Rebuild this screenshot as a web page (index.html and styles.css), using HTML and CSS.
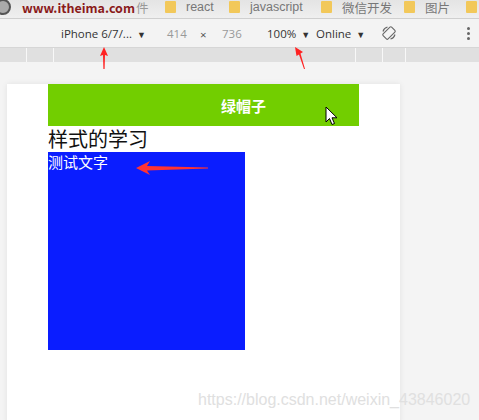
FILE: index.html
```html
<!DOCTYPE html>
<html>
<head>
<meta charset="utf-8">
<link rel="stylesheet" href="styles.css">
</head>
<body>
<div class="bookmarks">
  <span class="bm-logo"></span>
  <span class="bm-site">www.itheima.com</span><span class="bm-gray">件</span>
  <span class="folder fr"></span><span class="bm-text w-react">react</span>
  <span class="folder"></span><span class="bm-text w-js">javascript</span>
  <span class="folder"></span><span class="bm-text w-wx">微信开发</span>
  <span class="folder"></span><span class="bm-text w-pic">图片</span>
  <span class="folder"></span>
</div>
<div class="toolbar">
  <span class="t-device">iPhone 6/7/... <span class="tri">▼</span></span>
  <span class="t-w dim">414</span>
  <span class="t-x">×</span>
  <span class="t-h dim">736</span>
  <span class="t-zoom">100% <span class="tri">▼</span></span>
  <span class="t-online">Online <span class="tri">▼</span></span>
  <svg class="rotate" width="16" height="16" viewBox="0 0 16 16"><g fill="none" stroke="#666" stroke-width="1.1"><rect x="4.5" y="2" width="7" height="12" rx="1.2" transform="rotate(45 8 8)"/><path d="M2 6.5 A6.2 6.2 0 0 1 6.5 2"/><path d="M14 9.5 A6.2 6.2 0 0 1 9.5 14"/></g></svg>
  <span class="dots"><i></i><i></i><i></i></span>
</div>
<div class="ruler">
  <span class="seg s1"></span><span class="seg s2"></span><span class="seg s3"></span><span class="seg s4"></span><span class="seg s5"></span>
</div>
<div class="stage">
  <div class="device">
    <div class="header">绿帽子</div>
    <div class="title">样式的学习</div>
    <div class="box">测试文字</div>
  </div>
</div>
<svg class="arrow-up a1" width="10" height="22" viewBox="0 0 10 22"><path d="M5 0 L9 9 L6 8 L5.6 22 L4.4 22 L4 8 L1 9 Z" fill="#f22"/></svg>
<svg class="arrow-up a2" width="12" height="22" viewBox="0 0 12 22"><path d="M1 0 L9 5 L6.5 6.5 L11 22 L10 22 L5 7.5 L2.5 9 Z" fill="#f22"/></svg>
<svg class="arrow-left" width="72" height="14" viewBox="0 0 72 14"><path d="M0 7 L14 0 L11 5 L72 6.5 L72 7.5 L11 9.5 L14 14 Z" fill="#f33"/></svg>
<svg class="cursor" width="14" height="20" viewBox="0 0 14 20"><path d="M1 1 L1 16 L4.5 12.5 L7 18.5 L9.5 17.5 L7 11.8 L12 11.8 Z" fill="#fff" stroke="#000" stroke-width="1"/></svg>
<div class="watermark">https://blog.csdn.net/weixin_43846020</div>
</body>
</html>
```
FILE: styles.css
```css
html, body { margin: 0; padding: 0; }
body {
  width: 479px; height: 420px; overflow: hidden; position: relative;
  background: #f4f4f4;
  font-family: "Noto Sans CJK SC", "Liberation Sans", sans-serif;
}
.bookmarks {
  height: 18px; display: flex; align-items: center;
  background: linear-gradient(#e4e4e4, #efefef);
  border-bottom: 1px solid #cfcfcf;
  font-size: 12.5px; color: #888; white-space: nowrap; overflow: hidden;
}
.bookmarks > span { position: relative; top: -2px; flex: none; }
.bm-logo {
  width: 12px; height: 12px; border-radius: 50%; margin-left: -5px;
  border: 2px solid #555; background: #aaa;
}
.bm-site {
  color: #8a1a1a; font-weight: bold; font-size: 12.5px; margin-left: 11px;
  width: 114px; letter-spacing: 0;
}
.bm-gray { color: #999; width: 11px; }
.folder {
  width: 11px; height: 12px; background: #f2c85a; border-radius: 1px;
  margin-right: 10px;
}
.fr { margin-left: 18px; }
.bm-text { color: #777; font-family: "Liberation Sans", "Noto Sans CJK SC", sans-serif; font-size: 12.5px; }
.w-react { width: 43px; }
.w-js { width: 71px; }
.w-wx { width: 62px; }
.w-pic { width: 41px; }
.toolbar {
  height: 28px; display: flex; align-items: center;
  background: #f3f3f3; font-size: 11.5px; color: #333;
  font-family: "Open Sans", "Liberation Sans", sans-serif;
  padding-left: 61px; box-sizing: border-box;
}
.toolbar > span { flex: none; }
.tri { font-size: 9px; margin-left: 2px; }
.dim { color: #999; }
.t-device { width: 106px; }
.t-w { width: 33px; }
.t-x { width: 22px; color: #555; position: relative; top: 1px; }
.t-h { width: 45px; }
.t-zoom { width: 49px; }
.t-online { width: 65px; }
.rotate { flex: none; }
.dots { margin-left: auto; margin-right: 9px; display: flex; flex-direction: column; gap: 2px; }
.dots i { width: 3px; height: 3px; background: #666; border-radius: 50%; display: block; }
.ruler {
  height: 14px; background: #e0e0e0; position: relative;
  border-top: 1px solid #d6d6d6;
}
.seg { position: absolute; top: 0; bottom: 0; width: 1px; background: #f8f8f8; }
.s1 { left: 26px; } .s2 { left: 53px; } .s3 { left: 355px; } .s4 { left: 382px; } .s5 { left: 405px; }
.stage { padding: 23px 0 0 7px; }
.device {
  width: 393px; height: 340px; background: #fff;
  box-shadow: 0 0 6px rgba(0,0,0,0.08);
  padding-left: 41px; box-sizing: border-box;
}
.header {
  width: 311px; height: 42px; margin-top: -1px; background: #72ce00;
  color: #fff; font-weight: bold; font-size: 15px;
  display: flex; align-items: center; justify-content: center;
  padding-left: 80px; box-sizing: border-box;
}
.title { font-size: 20px; color: #111; line-height: 26px; height: 26px; }
.box {
  width: 197px; height: 198px; background: #0a1dff; color: #fff;
  font-size: 15px; line-height: 20px;
}
.arrow-up { position: absolute; }
.a1 { left: 99px; top: 47px; }
.a2 { left: 294px; top: 47px; }
.arrow-left { position: absolute; left: 136px; top: 161px; }
.cursor { position: absolute; left: 325px; top: 106px; }
.watermark {
  position: absolute; left: 198px; top: 391px;
  font-family: "Liberation Sans", sans-serif; font-size: 16px; color: #e0e0e0;
}
```
